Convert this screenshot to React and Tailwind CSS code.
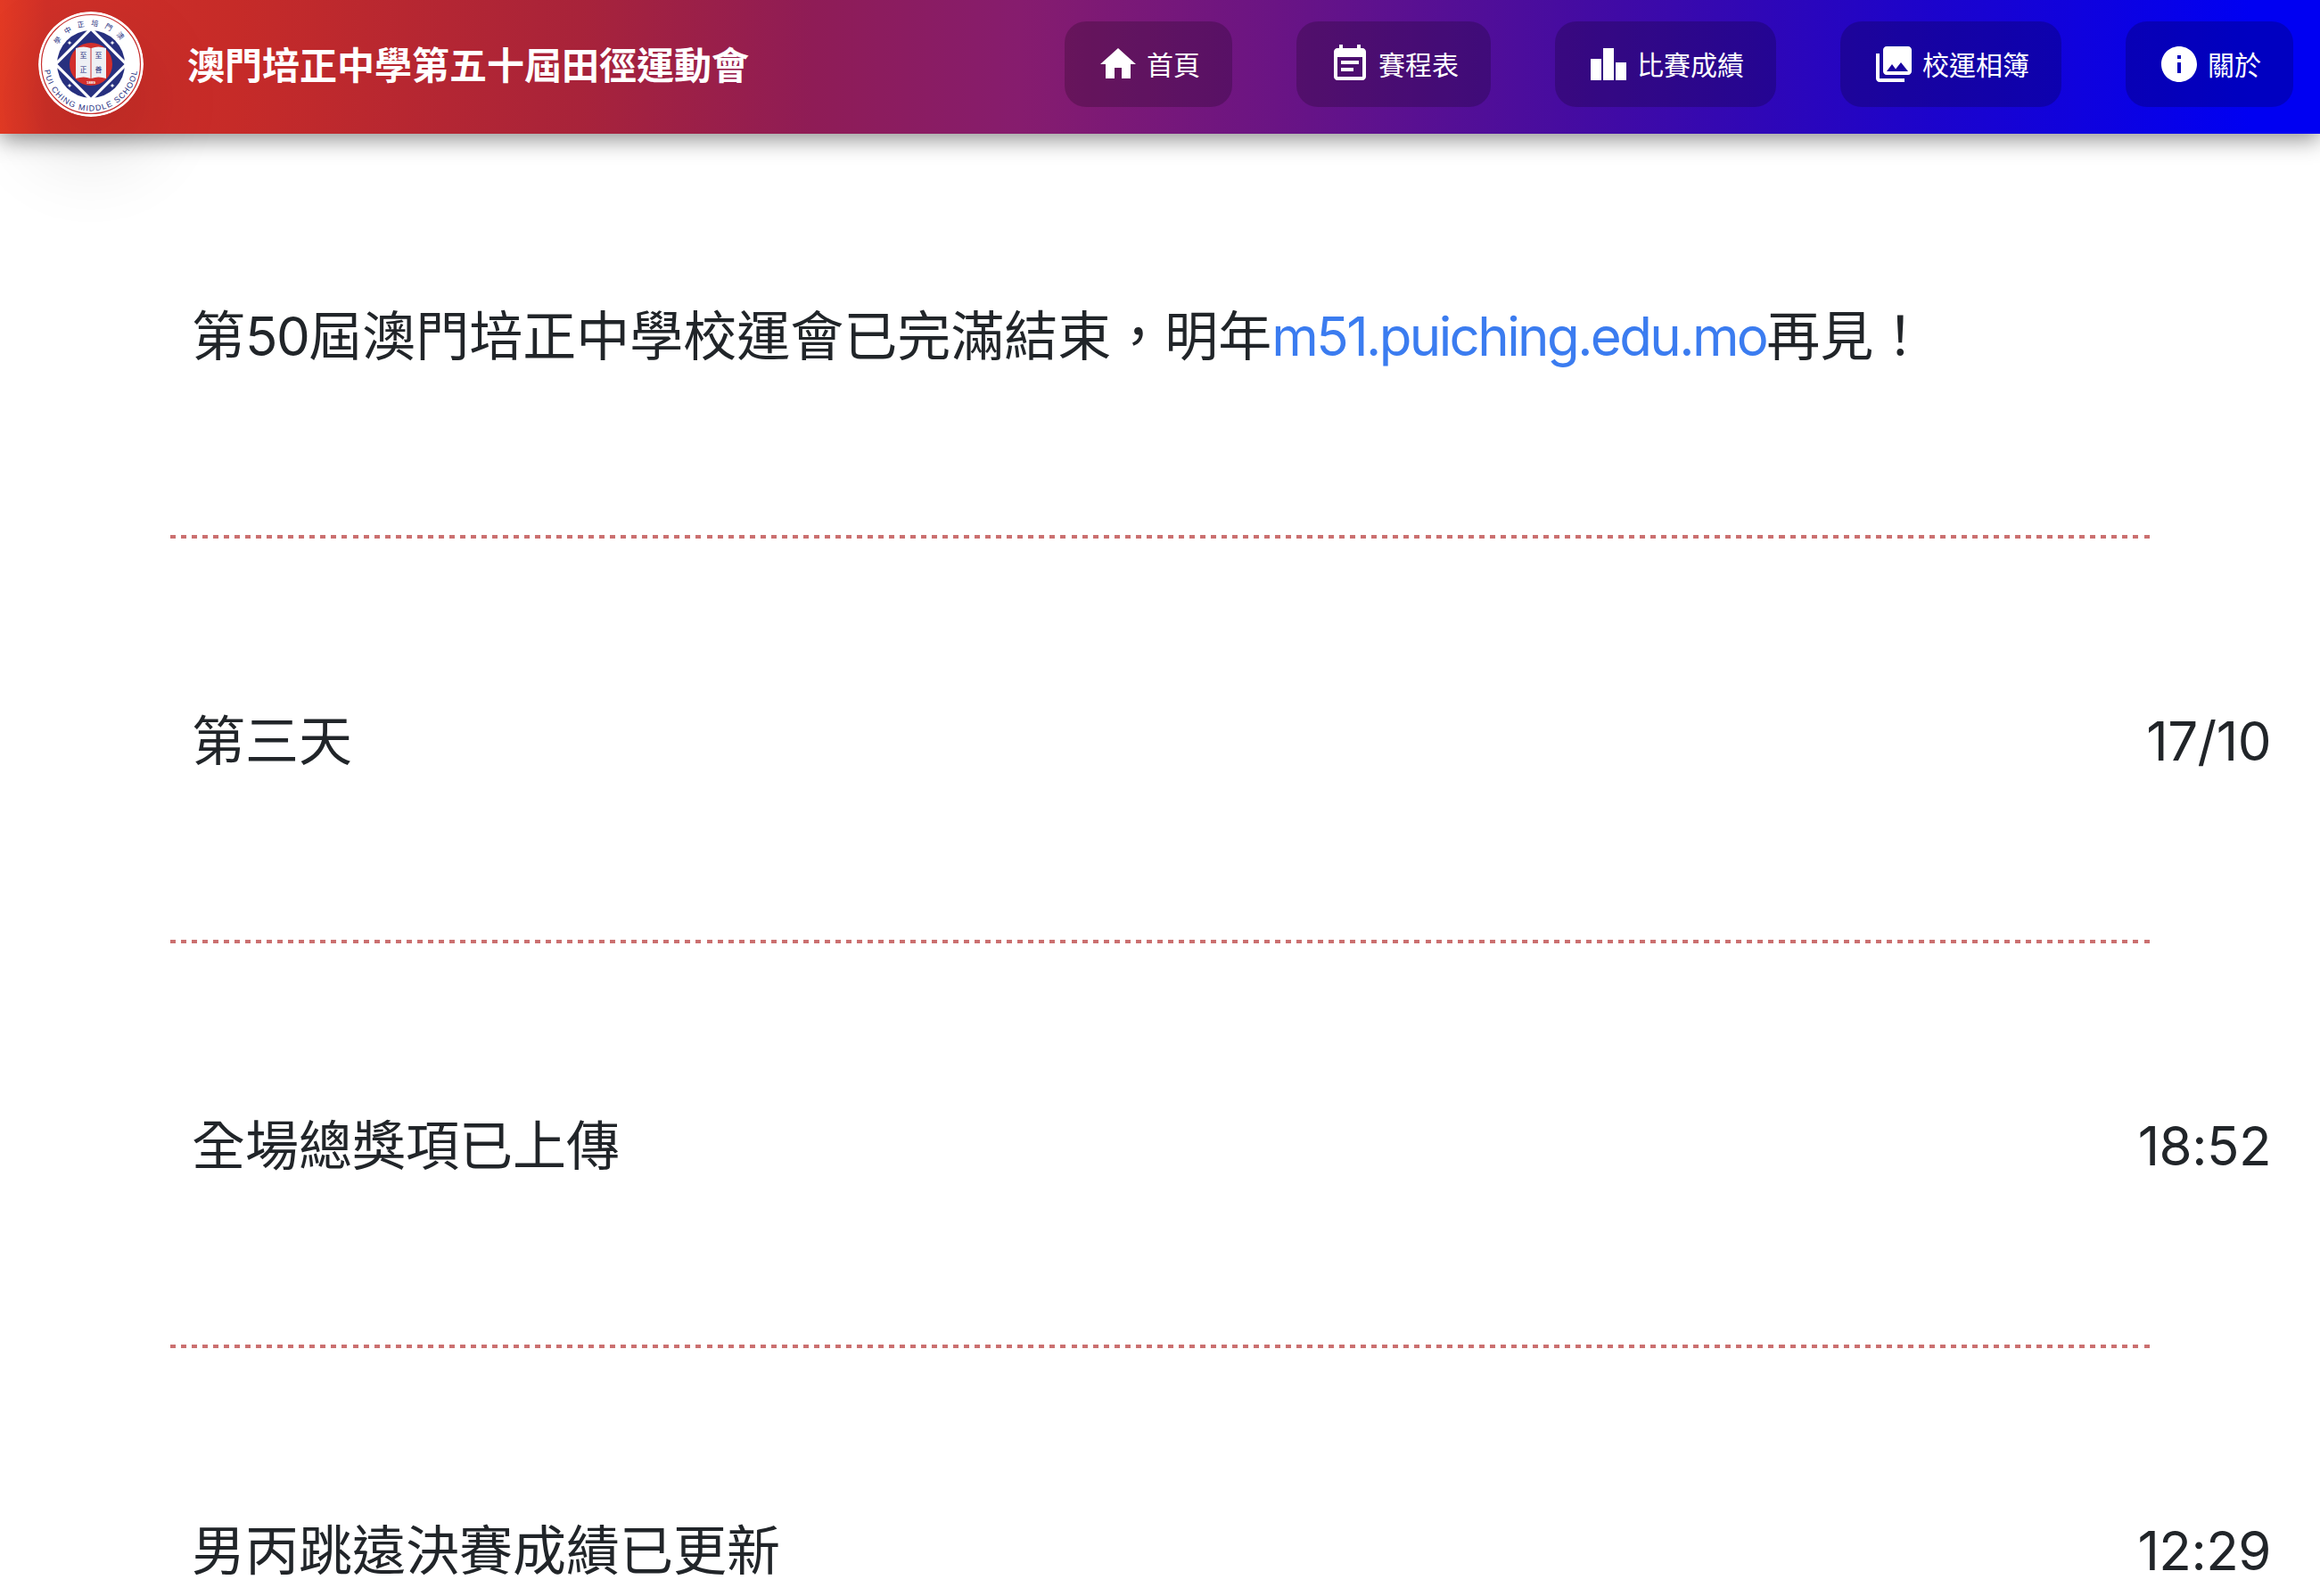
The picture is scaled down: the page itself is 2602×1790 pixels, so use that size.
const NAV = [
  { label: "首頁", d: "M10 20v-6h4v6h5v-8h3L12 3 2 12h3v8z" },
  {
    label: "賽程表",
    d: "M17 10H7v2h10v-2zm2-7h-1V1h-2v2H8V1H6v2H5c-1.11 0-1.99.9-1.99 2L3 19c0 1.1.89 2 2 2h14c1.1 0 2-.9 2-2V5c0-1.1-.9-2-2-2zm0 16H5V8h14v11zm-5-5H7v2h7v-2z",
  },
  { label: "比賽成績", d: "M2 9h6v12H2zM9 3h6v18H9zM16 11h6v10h-6z" },
  {
    label: "校運相簿",
    d: "M22 16V4c0-1.1-.9-2-2-2H8c-1.1 0-2 .9-2 2v12c0 1.1.9 2 2 2h12c1.1 0 2-.9 2-2zm-11-4l2.03 2.71L16 11l4 5H8l3-4zM2 6v14c0 1.1.9 2 2 2h14v-2H4V6H2z",
  },
  {
    label: "關於",
    d: "M12 2C6.48 2 2 6.48 2 12s4.48 10 10 10 10-4.48 10-10S17.52 2 12 2zm1 15h-2v-6h2v6zm0-8h-2V7h2v2z",
  },
];

const POSTS = [
  { title: "第三天", time: "17/10" },
  { title: "全場總獎項已上傳", time: "18:52" },
  { title: "男丙跳遠決賽成績已更新", time: "12:29" },
];

function Logo() {
  const star = (x, y) => (
    <path
      key={x + "-" + y}
      d={`M${x} ${y - 2.6}l.8 1.8 1.8.8-1.8.8-.8 1.8-.8-1.8-1.8-.8 1.8-.8z`}
      fill="#ffffff"
    />
  );
  return (
    <svg viewBox="0 0 118 118" className="h-[118px] w-[118px] shrink-0 rounded-full shadow-[0_40px_90px_10px_rgba(0,0,0,0.11)]">
      <circle cx="59" cy="59" r="59" fill="#ffffff" />
      <circle cx="59" cy="59" r="55.5" fill="none" stroke="#c7302f" strokeWidth="1.2" />
      <circle cx="59" cy="59" r="38" fill="#27307f" />
      <path d="M59 17 L101 59 L59 101 L17 59 Z" fill="#ffffff" />
      <path d="M59 21.5 L96.5 59 L59 96.5 L21.5 59 Z" fill="#27307f" />
      <circle cx="59" cy="59" r="24" fill="#d22f2c" />
      <path d="M42 41 Q51 38 58.5 41 V75 Q51 72 42 75 Z" fill="#eef0f4" />
      <path d="M59.5 41 Q67 38 76 41 V75 Q67 72 59.5 75 Z" fill="#eef0f4" />
      <g fontSize="8" fill="#27307f" textAnchor="middle" fontFamily="'Noto Sans CJK TC', serif">
        <text x="50.5" y="52">至</text>
        <text x="67.5" y="52">至</text>
        <text x="50.5" y="68">正</text>
        <text x="67.5" y="68">善</text>
      </g>
      <text x="59" y="81" fontSize="4.4" fontWeight="bold" fill="#ffffff" textAnchor="middle" fontFamily="'Liberation Sans', sans-serif">
        1889
      </text>
      {star(35, 35)}
      {star(83, 35)}
      {star(35, 83)}
      {star(83, 83)}
      <defs>
        <path id="logo-top" d="M16 59 A43 43 0 0 1 102 59" />
        <path id="logo-bottom" d="M6.5 59 A52.5 52.5 0 0 0 111.5 59" />
      </defs>
      <text fontSize="8" fill="#27307f" fontFamily="'Noto Sans CJK TC', serif">
        <textPath href="#logo-top" startOffset="50%" textAnchor="middle" letterSpacing="7">
          學中正培門澳
        </textPath>
      </text>
      <text fontSize="9" fill="#27307f" fontFamily="'Liberation Sans', sans-serif">
        <textPath href="#logo-bottom" startOffset="50%" textAnchor="middle" letterSpacing="1.2">
          PUI CHING MIDDLE SCHOOL
        </textPath>
      </text>
    </svg>
  );
}

function Row({ children, time }) {
  return (
    <div className="flex items-center justify-between pl-[215px] pr-[55px] pt-[182px] pb-[178px] text-[60px] leading-[90px]">
      <p>{children}</p>
      {time && <span className="tracking-[-0.5px]">{time}</span>}
    </div>
  );
}

function Divider() {
  return <div className="ml-[191px] h-[4px] w-[2220px] bg-[repeating-linear-gradient(to_right,#cb7070_0,#cb7070_6px,transparent_6px,transparent_12.03px)]" />;
}

export default function App() {
  return (
    <div className="h-screen overflow-hidden bg-white text-[#212529] font-['Inter','Noto_Sans_CJK_TC',sans-serif]">
      <header className="relative z-10 flex h-[150px] items-center justify-between bg-[linear-gradient(to_right,#e33a24_0%,#d03028_2%,#c62b28_10%,#a8233a_25%,#8f1c56_35%,#861c6e_44%,#6a1484_55%,#3f0aa6_70%,#1f04c8_82%,#0000f2_97%)] pb-[6px] pl-[43px] pr-[30px] shadow-[0_6px_24px_rgba(0,0,0,0.45)]">
        <div className="flex items-center gap-[49px]">
          <Logo />
          <span className="mt-[2px] text-[42px] font-bold text-white">澳門培正中學第五十屆田徑運動會</span>
        </div>
        <nav className="flex gap-[72px]">
          {NAV.map((item) => (
            <a key={item.label} className="flex h-[96px] items-center gap-2 rounded-[24px] bg-black/20 px-9 text-[30px] text-white">
              <svg viewBox="0 0 24 24" fill="currentColor" className="h-12 w-12 shrink-0">
                <path d={item.d} />
              </svg>
              <span className="mt-[2px]">{item.label}</span>
            </a>
          ))}
        </nav>
      </header>

      <main>
        <Row>
          第<span className="tracking-[-1.5px]">50</span>屆澳門培正中學校運會已完滿結束，明年<a className="tracking-[-2.6px] text-[#3b7cf0]">m51.puiching.edu.mo</a>再見！
        </Row>
        {POSTS.map((post) => (
          <div key={post.title}>
            <Divider />
            <Row time={post.time}>{post.title}</Row>
          </div>
        ))}
      </main>
    </div>
  );
}
